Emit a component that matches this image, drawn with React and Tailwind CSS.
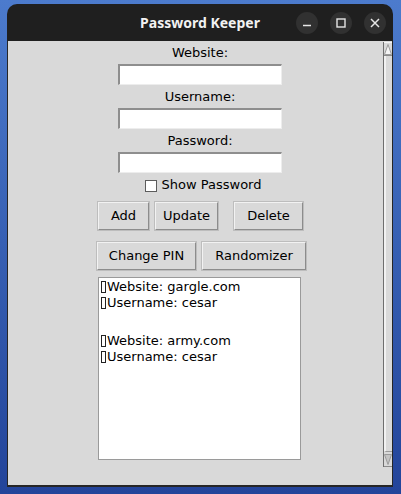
import React, { useState } from "react";

const entries = [
  ["Website: gargle.com", "Username: cesar"],
  ["Website: army.com", "Username: cesar"],
];

// tk draws the stray control char as a missing-glyph box
function Tofu() {
  return (
    <span className="inline-block w-[5px] h-[12px] border border-[#222] mr-[1px] align-[-2px]" />
  );
}

function TkButton({ label, width, className = "" }) {
  return (
    <button
      className={`h-[28px] ${width} ${className} bg-[#d9d9d9] border border-t-[#f2f2f2] border-l-[#f2f2f2] border-b-[#8c8c8c] border-r-[#8c8c8c] outline outline-1 outline-[#bdbdbd] text-[13px] leading-[26px] text-black text-center`}
    >
      {label}
    </button>
  );
}

function TkEntry({ value, onChange, type = "text" }) {
  return (
    <input
      type={type}
      value={value}
      onChange={(e) => onChange(e.target.value)}
      className="w-[164px] h-[21px] bg-white border border-t-2 border-l-2 border-t-[#8e8e8e] border-l-[#8e8e8e] border-b-[#ededed] border-r-[#ededed] px-1 text-[13px] outline-none"
    />
  );
}

function TitleButton({ children }) {
  return (
    <div className="w-[22px] h-[22px] rounded-full bg-[#313131] flex items-center justify-center">
      {children}
    </div>
  );
}

function Scrollbar() {
  return (
    <div className="w-[9px] h-[425px] mt-[1px] border-l border-[#6e6e6e] flex flex-col bg-[#d9d9d9]">
      <div className="h-[14px] border-b border-[#8a8a8a] border-t border-t-[#f4f4f4] flex items-center justify-center">
        <svg width="8" height="11" viewBox="0 0 8 11">
          <polygon points="4,0.5 7.5,10.5 0.5,10.5" fill="#f4f4f4" stroke="#9a9a9a" strokeWidth="1" />
        </svg>
      </div>
      <div className="flex-1 border-l-2 border-[#f1f1f1] border-b border-b-[#9a9a9a]" />
      <div className="h-[15px] border-b border-[#8a8a8a] flex items-center justify-center">
        <svg width="8" height="11" viewBox="0 0 8 11">
          <polygon points="0.5,0.5 7.5,0.5 4,10.5" fill="#c4c4c4" stroke="#9a9a9a" strokeWidth="1" />
        </svg>
      </div>
    </div>
  );
}

export default function App() {
  const [website, setWebsite] = useState("");
  const [username, setUsername] = useState("");
  const [password, setPassword] = useState("");
  const [showPassword, setShowPassword] = useState(false);

  return (
    <div className="w-[401px] h-[494px] bg-gradient-to-b from-[#4c7bcd] to-[#23449a] pt-[4px] pl-[7px] overflow-hidden font-['DejaVu_Sans',sans-serif]">
      <div className="w-[386px] h-[483px] flex flex-col">
        {/* Title bar */}
        <div className="relative h-[37px] bg-[#1f1f1f] rounded-t-[10px] flex items-center justify-center">
          <span className="font-['Noto_Sans',sans-serif] font-bold text-[14px] text-[#f2f2f2]">
            Password Keeper
          </span>
          <div className="absolute right-[7px] top-[8px] flex gap-[12px]">
            <TitleButton>
              <svg width="10" height="10" viewBox="0 0 10 10">
                <line x1="1" y1="7.5" x2="9" y2="7.5" stroke="#e6e6e6" strokeWidth="1.5" />
              </svg>
            </TitleButton>
            <TitleButton>
              <svg width="10" height="10" viewBox="0 0 10 10">
                <rect x="1" y="1" width="8" height="8" fill="none" stroke="#e6e6e6" strokeWidth="1.4" />
              </svg>
            </TitleButton>
            <TitleButton>
              <svg width="10" height="10" viewBox="0 0 10 10">
                <path d="M1 1 L9 9 M9 1 L1 9" stroke="#e6e6e6" strokeWidth="1.5" />
              </svg>
            </TitleButton>
          </div>
        </div>

        {/* Window body */}
        <div className="flex-1 flex bg-[#d9d9d9] border-x border-b-2 border-[#262626] text-black text-[13px]">
          <div className="flex-1 flex flex-col items-center pl-[9px]">
            <div className="h-[23px] leading-[23px]">Website:</div>
            <TkEntry value={website} onChange={setWebsite} />
            <div className="h-[23px] leading-[23px]">Username:</div>
            <TkEntry value={username} onChange={setUsername} />
            <div className="h-[23px] leading-[23px]">Password:</div>
            <TkEntry
              value={password}
              onChange={setPassword}
              type={showPassword ? "text" : "password"}
            />

            <label className="h-[24px] leading-[24px] flex items-center gap-[5px] ml-[6px]">
              <span
                onClick={() => setShowPassword(!showPassword)}
                className="w-[12px] h-[12px] bg-white border border-[#5c5c5c] mt-[2px]"
              />
              <span>Show Password</span>
            </label>

            <div className="flex mt-[5px] ml-[1px]">
              <TkButton label="Add" width="w-[51px]" />
              <TkButton label="Update" width="w-[63px]" className="ml-[6px]" />
              <TkButton label="Delete" width="w-[69px]" className="ml-[16px]" />
            </div>

            <div className="flex mt-[12px] ml-[3px]">
              <TkButton label="Change PIN" width="w-[99px]" />
              <TkButton label="Randomizer" width="w-[104px]" className="ml-[6px]" />
            </div>

            {/* Listbox */}
            <div className="w-[203px] h-[183px] mt-[7px] mr-[1px] bg-white border border-[#9a9a9a] pt-[1px] pl-[2px]">
              {entries.map((entry, idx) => (
                <div key={idx}>
                  {entry.map((line) => (
                    <div key={line} className="leading-[16px] whitespace-nowrap">
                      <Tofu />
                      {line}
                    </div>
                  ))}
                  {idx < entries.length - 1 && <div className="h-[22px]" />}
                </div>
              ))}
            </div>
          </div>
          <Scrollbar />
        </div>
      </div>
    </div>
  );
}
